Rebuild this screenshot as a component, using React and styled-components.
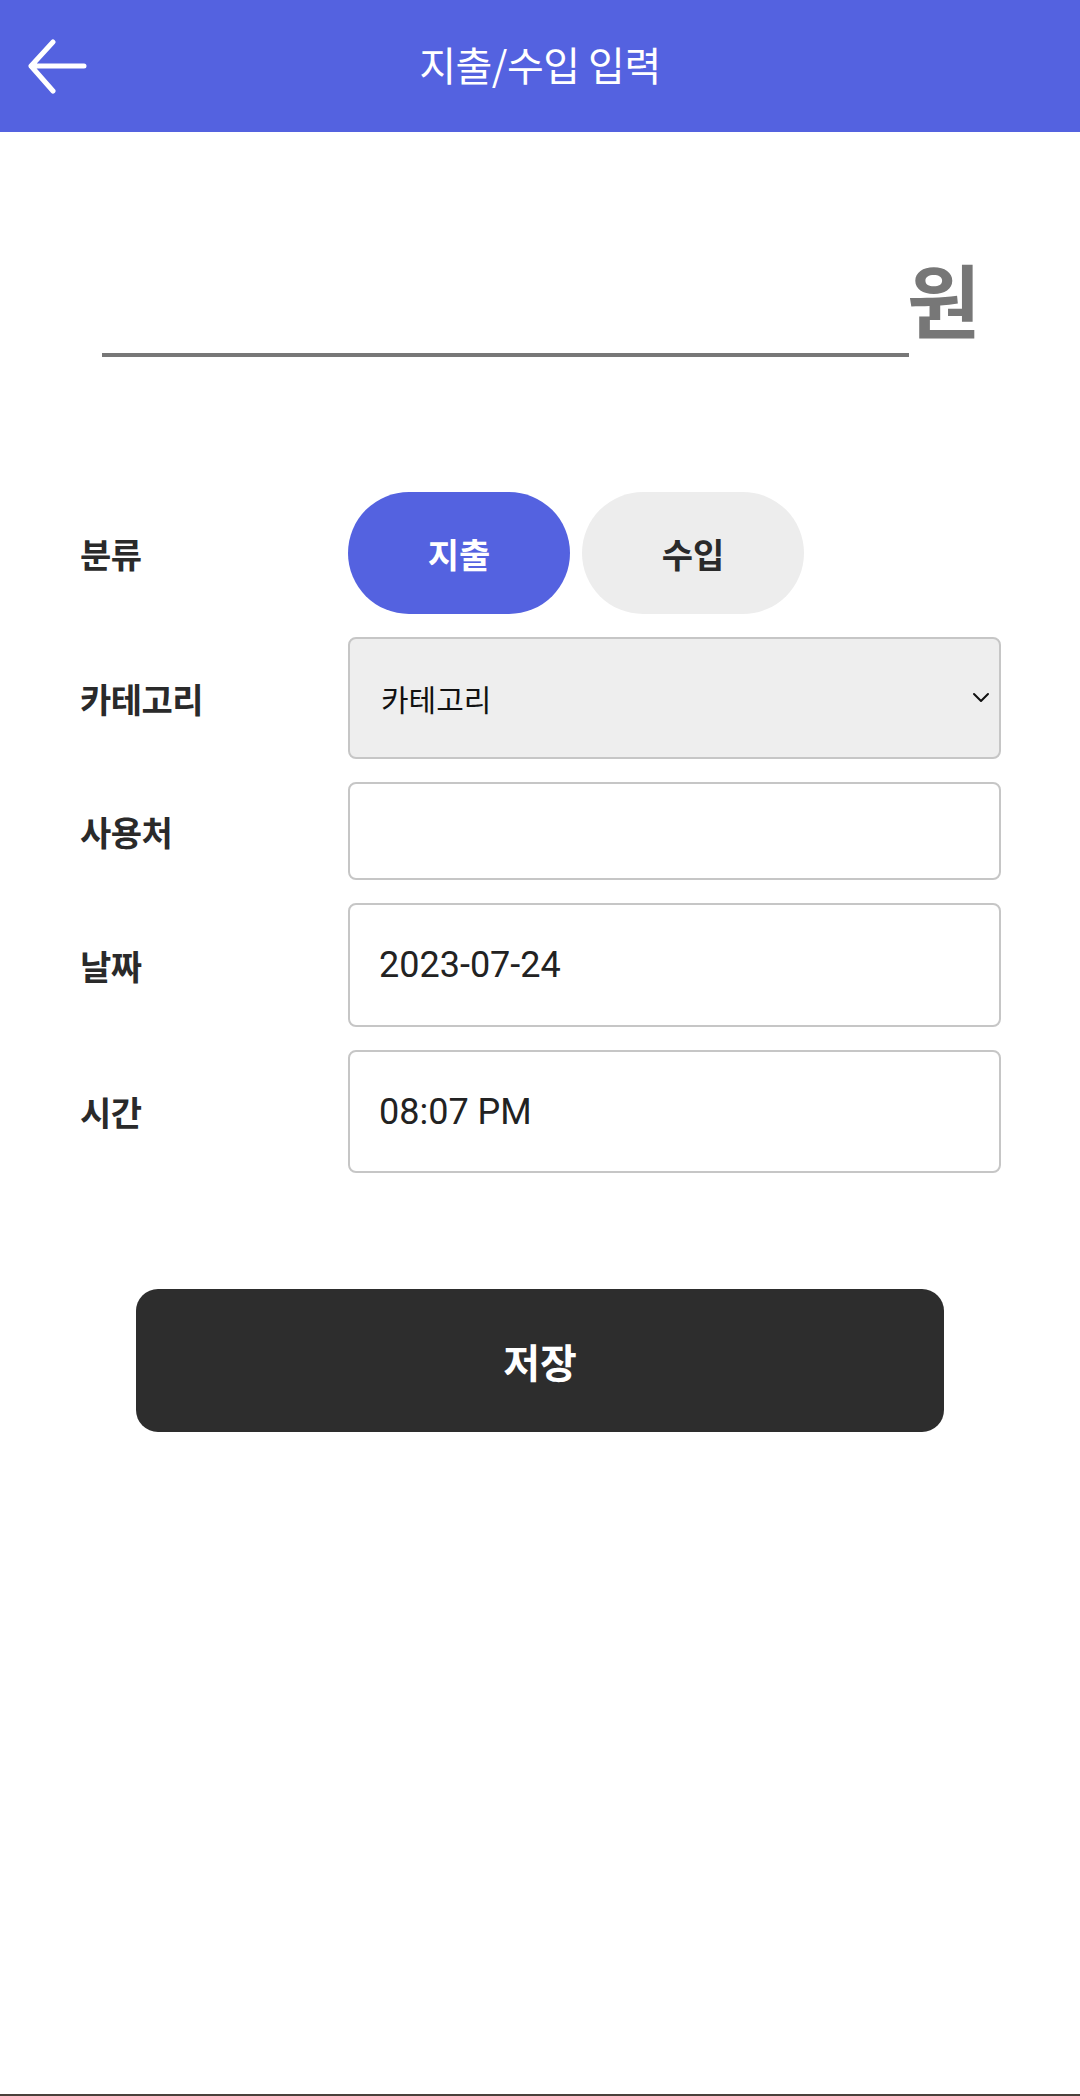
import React, { useState } from 'react';
import styled, { createGlobalStyle } from 'styled-components';

const GlobalStyle = createGlobalStyle`
  html, body {
    margin: 0;
    padding: 0;
    background: #ffffff;
  }
  body {
    font-family: Roboto, "Noto Sans CJK KR", sans-serif;
  }
  * {
    box-sizing: border-box;
  }
`;

const KR = `"Noto Sans CJK KR", Roboto, sans-serif`;

const Page = styled.div`
  min-height: 2096px;
  display: flex;
  flex-direction: column;
  background: #ffffff;
`;

const Header = styled.header`
  height: 132px;
  background: #5462e0;
  display: grid;
  grid-template-columns: 1fr auto 1fr;
  align-items: center;
  padding: 0 26px;
`;

const BackButton = styled.button`
  justify-self: start;
  background: none;
  border: none;
  padding: 0;
  margin-top: 2px;
  display: flex;
  cursor: pointer;
`;

const Title = styled.h1`
  margin: 0 0 4px;
  font-family: ${KR};
  font-weight: 400;
  font-size: 40px;
  color: #ffffff;
  letter-spacing: -0.5px;
`;

const AmountRow = styled.div`
  display: flex;
  align-items: flex-end;
  margin-top: 125px;
  padding-left: 102px;
`;

const AmountInput = styled.input`
  width: 807px;
  height: 100px;
  border: none;
  border-bottom: 4px solid #777777;
  outline: none;
  background: transparent;
  font-family: Roboto, sans-serif;
  font-size: 56px;
  color: #333;
  text-align: right;
  padding: 0 8px;
`;

const Won = styled.span`
  font-family: ${KR};
  font-weight: 700;
  font-size: 80px;
  line-height: 1;
  color: #777777;
  margin: 0 0 20px -2px;
`;

const Form = styled.div`
  display: grid;
  grid-template-columns: 268px 1fr;
  row-gap: 23px;
  align-items: center;
  margin-top: 135px;
  padding: 0 79px 0 80px;
`;

const Label = styled.div`
  font-family: ${KR};
  font-weight: 700;
  font-size: 34px;
  color: #2a2a2a;
  letter-spacing: -0.5px;
`;

const Toggle = styled.div`
  display: flex;
  gap: 12px;
`;

const Pill = styled.button`
  width: 222px;
  height: 122px;
  border: none;
  border-radius: 61px;
  background: ${({ $active }) => ($active ? '#5462e0' : '#ededed')};
  color: ${({ $active }) => ($active ? '#ffffff' : '#2a2a2a')};
  font-family: ${KR};
  font-weight: 700;
  font-size: 34px;
  cursor: pointer;
`;

const SelectWrap = styled.div`
  position: relative;
  height: 122px;
`;

const Select = styled.select`
  width: 100%;
  height: 100%;
  appearance: none;
  -webkit-appearance: none;
  background: #eeeeee;
  border: 2px solid #c6c6c6;
  border-radius: 8px;
  padding: 0 60px 0 31px;
  font-family: ${KR};
  font-size: 30px;
  color: #111111;
  outline: none;
`;

const Chevron = styled.svg`
  position: absolute;
  right: 10px;
  top: 50%;
  transform: translateY(-50%);
  pointer-events: none;
`;

const Field = styled.input`
  width: 100%;
  height: ${({ $h }) => $h}px;
  border: 2px solid #c6c6c6;
  border-radius: 8px;
  background: #ffffff;
  padding: 0 29px;
  font-family: Roboto, ${KR};
  font-size: 36px;
  color: #222222;
  outline: none;
`;

const SaveButton = styled.button`
  align-self: center;
  width: 808px;
  height: 143px;
  margin-top: 116px;
  border: none;
  border-radius: 22px;
  background: #2d2d2d;
  color: #ffffff;
  font-family: ${KR};
  font-weight: 700;
  font-size: 40px;
  cursor: pointer;
`;

const BottomLine = styled.div`
  margin-top: auto;
  height: 2px;
  background: #4a403b;
`;

export default function App() {
  const [type, setType] = useState('expense');

  return (
    <Page>
      <GlobalStyle />
      <Header>
        <BackButton aria-label="뒤로">
          <svg width="64" height="56" viewBox="0 0 64 56" fill="none">
            <path
              d="M5 27 H58 M27 3 L5 27 L27 52"
              stroke="#ffffff"
              strokeWidth="5"
              strokeLinecap="round"
              strokeLinejoin="round"
            />
          </svg>
        </BackButton>
        <Title>지출/수입 입력</Title>
        <div />
      </Header>

      <AmountRow>
        <AmountInput type="text" inputMode="numeric" />
        <Won>원</Won>
      </AmountRow>

      <Form>
        <Label>분류</Label>
        <Toggle>
          <Pill $active={type === 'expense'} onClick={() => setType('expense')}>지출</Pill>
          <Pill $active={type === 'income'} onClick={() => setType('income')}>수입</Pill>
        </Toggle>

        <Label>카테고리</Label>
        <SelectWrap>
          <Select defaultValue="">
            <option value="">카테고리</option>
          </Select>
          <Chevron width="20" height="12" viewBox="0 0 20 12" fill="none">
            <path d="M3 2 L10 9 L17 2" stroke="#111" strokeWidth="2" strokeLinecap="round" strokeLinejoin="round" />
          </Chevron>
        </SelectWrap>

        <Label>사용처</Label>
        <Field $h={98} type="text" />

        <Label>날짜</Label>
        <Field $h={124} type="text" defaultValue="2023-07-24" />

        <Label>시간</Label>
        <Field $h={123} type="text" defaultValue="08:07 PM" />
      </Form>

      <SaveButton>저장</SaveButton>
      <BottomLine />
    </Page>
  );
}
